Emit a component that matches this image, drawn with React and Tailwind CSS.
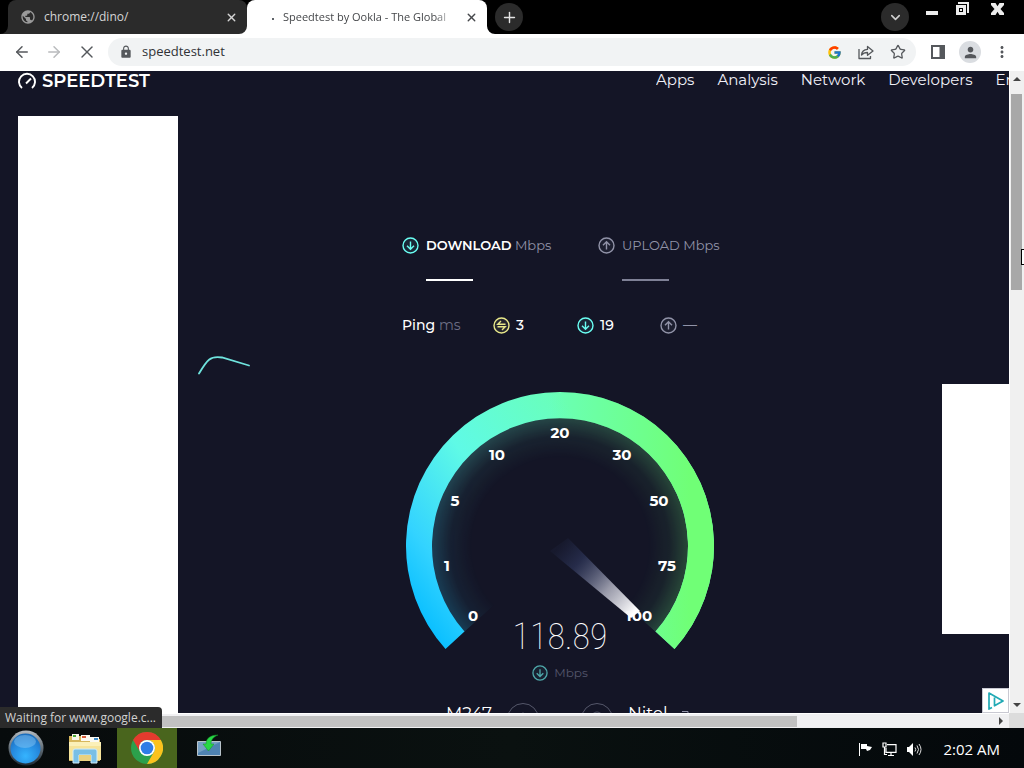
import React from "react";
import { ArrowLeft, ArrowRight, X, Plus, ChevronDown, Star } from "lucide-react";
import { FcGoogle } from "react-icons/fc";
import { MdLock, MdPerson, MdMoreVert, MdPublic } from "react-icons/md";

const ui = "font-['Segoe_UI','Open_Sans',sans-serif]";
const brand = "font-['Montserrat','Inter',sans-serif]";

function Flare({ className }) {
  return (
    <svg className={className} width="8" height="8" viewBox="0 0 8 8" aria-hidden="true">
      <path d="M0 8H8V0A8 8 0 0 1 0 8Z" fill="currentColor" />
    </svg>
  );
}

function TabStrip() {
  return (
    <div className="flex h-[34px] shrink-0 items-start bg-black pl-2 text-xs">
      <div className="relative flex h-full w-[239px] items-center rounded-t-lg bg-[#2b2b2b] pr-2 pl-3 text-[#d5d5d5]">
        <Flare className="absolute bottom-0 -left-2 text-[#2b2b2b]" />
        <MdPublic className="mr-2 size-4 shrink-0 text-[#9a9a9a]" />
        <span className="flex-1 truncate">chrome://dino/</span>
        <button aria-label="Close dino tab" className="flex size-4 items-center justify-center">
          <X size={13} strokeWidth={2.5} />
        </button>
      </div>
      <div className="relative flex h-full w-60 items-center rounded-t-lg bg-white pr-2 pl-3 text-[#45474a]">
        <Flare className="absolute bottom-0 -left-2 text-white" />
        <Flare className="absolute -right-2 bottom-0 -scale-x-100 text-white" />
        <span className="mr-2 flex size-4 shrink-0 items-center justify-center pt-1 pl-3">
          <span className="size-[2px] bg-[#5f6368]" />
        </span>
        <span className="w-[172px] overflow-hidden text-[11px] whitespace-nowrap [mask-image:linear-gradient(to_right,black_88%,transparent)]">
          Speedtest by Ookla - The Global
        </span>
        <button aria-label="Close Speedtest tab" className="ml-auto flex size-4 items-center justify-center">
          <X size={13} strokeWidth={2.5} />
        </button>
      </div>
      <button aria-label="New tab" className="mt-[3px] ml-2 flex size-7 items-center justify-center rounded-full bg-[#2b2b2b] text-[#e4e4e4]">
        <Plus size={17} />
      </button>
      <div className="ml-auto flex items-start pr-5 text-[#ececec]">
        <button aria-label="Search tabs" className="mt-[3px] flex size-7 items-center justify-center rounded-full bg-[#2b2b2b] text-[#cfcfcf]">
          <ChevronDown size={15} strokeWidth={2.5} />
        </button>
        <button aria-label="Minimize" className="mt-[11px] ml-[17px]">
          <svg width="12" height="4" viewBox="0 0 12 4"><path d="M0 0h12v4H0z" fill="currentColor" /></svg>
        </button>
        <button aria-label="Restore" className="mt-[2px] ml-[17px]">
          <svg width="14" height="14" viewBox="0 0 14 14">
            <path d="M3 0h11v11h-2V2H3z" fill="currentColor" />
            <path d="M1 3h10v10H1z M4 6v4h4V6z" fill="currentColor" fillRule="evenodd" />
            <path d="M5 7h2v2H5z" fill="currentColor" />
          </svg>
        </button>
        <button aria-label="Close window" className="mt-[3px] ml-[22px]">
          <svg width="13" height="12" viewBox="0 0 13 12">
            <path d="M0 0h4.500l2 3.200L8.500 0H13v2L9.500 6l3.500 4v2H8.500l-2-3.200L4.500 12H0v-2l3.500-4L0 2z" fill="currentColor" />
          </svg>
        </button>
      </div>
    </div>
  );
}

function Toolbar() {
  return (
    <div className="flex h-[37px] shrink-0 items-center bg-white pr-[13px] pb-px pl-[13px] text-[#55585c]">
      <button aria-label="Back" className="mr-[14px]"><ArrowLeft size={18} /></button>
      <button aria-label="Forward" className="mr-[14px] text-[#b9bbbd]"><ArrowRight size={18} /></button>
      <button aria-label="Stop loading"><X size={20} strokeWidth={1.7} /></button>
      <form className="ml-[11px] flex h-7 flex-1 items-center rounded-full bg-[#f1f3f4] pr-[10px] pl-[11px]">
        <MdLock size={14} className="mr-[9px]" />
        <input aria-label="Address" defaultValue="speedtest.net" className="min-w-0 flex-1 bg-transparent text-[13px] text-[#303236] outline-none" />
        <button type="button" aria-label="Search with Google" className="mr-4"><FcGoogle size={15} /></button>
        <button type="button" aria-label="Share" className="mr-4">
          <svg width="16" height="16" viewBox="0 0 16 16" fill="none" stroke="currentColor" strokeWidth="1.3" strokeLinejoin="round">
            <path d="M1 5v9.500h11.500V12" />
            <path d="M3.500 11c.3-3.600 2.500-5.400 6-5.600V2.500L15 7l-5.500 4.300V8.500c-2.800 0-4.600.8-6 2.500z" />
          </svg>
        </button>
        <button type="button" aria-label="Bookmark this tab"><Star size={16} strokeWidth={1.9} /></button>
      </form>
      <button aria-label="Side panel" className="ml-[15px]">
        <svg width="14" height="14" viewBox="0 0 14 14">
          <path d="M0 0h14v14H0z M2 2v10h6.500V2z" fill="currentColor" fillRule="evenodd" />
        </svg>
      </button>
      <button aria-label="Profile" className="ml-[14px] flex size-[22px] items-center justify-center rounded-full bg-[#dadde1]">
        <MdPerson size={17} />
      </button>
      <button aria-label="Menu" className="ml-3"><MdMoreVert size={18} /></button>
    </div>
  );
}

function CircleArrow({ up, className }) {
  return (
    <svg className={className} width="17" height="17" viewBox="0 0 17 17" fill="none" stroke="currentColor" strokeWidth="1.4" aria-hidden="true">
      <circle cx="8.500" cy="8.500" r="7.500" fill="currentColor" fillOpacity="0.08" />
      {up ? (
        <path d="M8.500 12.500V5M5 8.200 8.500 4.800 12 8.200" />
      ) : (
        <path d="M8.500 4.500V12M5 8.800l3.500 3.400L12 8.800" />
      )}
    </svg>
  );
}

function PingIcon() {
  return (
    <svg className="text-[#e8e88a]" width="17" height="17" viewBox="0 0 17 17" fill="none" stroke="currentColor" strokeWidth="1.4" aria-hidden="true">
      <circle cx="8.500" cy="8.500" r="7.500" fill="currentColor" fillOpacity="0.08" />
      <path d="M12.500 7.200H4.800L8 4M4.500 9.800h7.700L9 13" />
    </svg>
  );
}

function Results() {
  return (
    <div className="mx-auto w-[316px] whitespace-nowrap text-[#9193a8]">
      <div className="grid grid-cols-[196px_auto] text-[13px] leading-5">
        <div>
          <div className="flex items-center gap-[7px]">
            <CircleArrow className="text-[#6afff3]" />
            <span><span className="font-semibold text-white">DOWNLOAD</span> Mbps</span>
          </div>
          <div className="mt-6 ml-6 h-[2px] w-[47px] bg-white" />
        </div>
        <div>
          <div className="flex items-center gap-[7px]">
            <CircleArrow up />
            <span>UPLOAD Mbps</span>
          </div>
          <div className="mt-6 ml-6 h-[2px] w-[47px] bg-[#7f8196]" />
        </div>
      </div>
      <div className="mt-[34px] grid grid-cols-[91px_84px_83px_auto] items-center text-sm leading-5">
        <span><span className="font-medium text-white">Ping</span> <span className="text-[#6d6f85]">ms</span></span>
        <span className="flex items-center gap-[6px] font-medium text-white"><PingIcon />3</span>
        <span className="flex items-center gap-[6px] font-medium text-white"><CircleArrow className="text-[#6afff3]" />19</span>
        <span className="flex items-center gap-[6px]"><CircleArrow up />—</span>
      </div>
    </div>
  );
}

const marks = [
  ["0", 473, 621],
  ["1", 447, 571],
  ["5", 455, 506],
  ["10", 497, 460],
  ["20", 560, 438],
  ["30", 622, 460],
  ["50", 659, 506],
  ["75", 667, 571],
  ["100", 639, 621],
];

const arcPath = "M445.500 649A154 154 0 1 1 674.500 649L655.500 631.500A128 128 0 1 0 464.500 631.500Z";
const dialPath = "M560 546 464 632A129 129 0 1 1 656 632Z";

function Gauge() {
  return (
    <div className="mx-auto grid w-[308px] grid-rows-[291px]">
      <svg className="col-start-1 row-start-1" width="308" height="258" viewBox="406 392 308 258">
        <defs>
          <linearGradient id="arc" gradientUnits="userSpaceOnUse" x1="430" y1="650" x2="660" y2="480">
            <stop offset="0" stopColor="#00baff" />
            <stop offset="0.2" stopColor="#33d3ff" />
            <stop offset="0.5" stopColor="#5ffae6" />
            <stop offset="0.9" stopColor="#6affb8" />
          </linearGradient>
          <linearGradient id="green" gradientUnits="userSpaceOnUse" x1="550" y1="546" x2="690" y2="546">
            <stop offset="0" stopColor="#70ff76" stopOpacity="0" />
            <stop offset="1" stopColor="#70ff76" />
          </linearGradient>
          <radialGradient id="edge" gradientUnits="userSpaceOnUse" cx="560" cy="546" r="129">
            <stop offset="0.68" stopColor="#fff" stopOpacity="0" />
            <stop offset="0.85" stopColor="#fff" stopOpacity="0.06" />
            <stop offset="1" stopColor="#fff" stopOpacity="0.22" />
          </radialGradient>
          <mask id="glow" maskUnits="userSpaceOnUse" x="406" y="392" width="308" height="258">
            <circle cx="560" cy="546" r="129" fill="url(#edge)" />
          </mask>
          <linearGradient id="needle" gradientUnits="userSpaceOnUse" x1="560" y1="546" x2="634" y2="612">
            <stop offset="0" stopColor="#33406f" stopOpacity="0.1" />
            <stop offset="0.25" stopColor="#3c4876" stopOpacity="0.45" />
            <stop offset="0.65" stopColor="#b9bac9" stopOpacity="0.8" />
            <stop offset="1" stopColor="#fff" />
          </linearGradient>
        </defs>
        <g mask="url(#glow)">
          <path d={dialPath} fill="url(#arc)" />
          <path d={dialPath} fill="url(#green)" />
        </g>
        <path d={arcPath} fill="url(#arc)" />
        <path d={arcPath} fill="url(#green)" />
        <g className={brand} fill="#fff" fontSize="15" fontWeight="700" textAnchor="middle">
          {marks.map(([label, x, y]) => (
            <text key={label} x={x} y={y}>{label}</text>
          ))}
        </g>
        <path d="M550 551 568 538 640 611 631 618Z" fill="url(#needle)" />
      </svg>
      <div className="col-start-1 row-start-1 flex flex-col items-center self-end">
        <span className="font-['Roboto_Condensed','Roboto',sans-serif] text-[36px] leading-[40px] font-thin text-white">118.89</span>
        <span className="mt-[6px] flex h-5 items-center gap-[6px] text-xs text-[#55576c]">
          <CircleArrow className="size-4 text-[#4fa9ab]" />
          Mbps
        </span>
      </div>
    </div>
  );
}

function ServerRow() {
  return (
    <div className="mt-5 grid grid-cols-[1fr_106px_1fr] gap-x-[15px] text-[17px] leading-5 text-white">
      <span className="text-right">M247</span>
      <div className="flex justify-between">
        <svg width="32" height="32" viewBox="0 0 32 32" fill="none" stroke="#55576a">
          <circle cx="16" cy="16" r="15.500" />
          <circle cx="16" cy="13" r="3" />
        </svg>
        <svg width="32" height="32" viewBox="0 0 32 32" fill="none" stroke="#55576a">
          <circle cx="16" cy="16" r="15.500" />
          <circle cx="16" cy="15" r="6" />
        </svg>
      </div>
      <span className="flex gap-[13px]">
        Nitel
        <svg className="mt-2" width="8" height="8" viewBox="0 0 8 8" fill="none" stroke="#9193a8" aria-hidden="true">
          <path d="M1 .5h6v6" />
        </svg>
      </span>
    </div>
  );
}

function Page() {
  return (
    <div className={`relative min-w-0 overflow-hidden bg-[#141526] ${brand}`}>
      <div className="flex flex-col">
        <header className="flex h-[18px] items-center pl-[18px]">
          <a href="#home" className="flex items-center gap-[6px] pt-[2px] text-[18px] leading-5 font-semibold text-white">
            <svg width="18" height="18" viewBox="0 0 18 18" fill="none" stroke="currentColor" strokeWidth="1.900" aria-hidden="true">
              <path d="M4 16A8 8 0 1 1 14 16" />
              <path d="M8 11.500 13 6.500" />
            </svg>
            SPEEDTEST
          </a>
          <nav className="ml-auto flex w-[353px] shrink-0 gap-[23px] overflow-hidden text-[15px] leading-5 whitespace-nowrap text-[#f0f0f8]">
            <a href="#apps">Apps</a>
            <a href="#analysis">Analysis</a>
            <a href="#network">Network</a>
            <a href="#developers">Developers</a>
            <a href="#enterprise">Enterprise</a>
          </nav>
        </header>
        <div className="mt-[27px] grid grid-cols-[160px_minmax(0,1fr)_67px] pl-[18px]">
          <aside className="min-h-[600px] bg-white" />
          <main className="pt-[119px]">
            <Results />
            <svg className="mt-5 ml-5" width="52" height="20" viewBox="0 0 52 20" fill="none" aria-hidden="true">
              <path d="M1 18.500C9 5 12 .5 24 2.500L51 10.500" stroke="#6fe3dd" strokeWidth="1.800" strokeLinecap="round" />
            </svg>
            <div className="mt-[17px]"><Gauge /></div>
            <ServerRow />
          </main>
          <aside className="mt-[268px] h-[250px] bg-white" />
        </div>
      </div>
      <a href="#adchoices" aria-label="AdChoices" className="absolute right-0 bottom-0 flex h-[25px] w-[27px] items-center justify-center border border-[#c9c9d2] bg-white">
        <svg width="18" height="18" viewBox="0 0 18 18" fill="none" stroke="#22aab5" strokeWidth="1.700" strokeLinejoin="round">
          <path d="M5 15.500 2 17V1L16 9 7.500 13.800V5.500" />
        </svg>
      </a>
    </div>
  );
}

function Arrow({ d, className }) {
  return (
    <svg className={className} width="8" height="8" viewBox="0 0 8 8" aria-hidden="true"><path d={d} fill="#444" /></svg>
  );
}

function Taskbar() {
  return (
    <footer className="flex h-10 shrink-0 items-center bg-linear-to-r from-[#070b0c] via-[#0a1110] to-[#04080b] text-white">
      <button aria-label="Start" className="w-[52px] pl-[7px]">
        <svg width="38" height="36" viewBox="0 0 38 36">
          <defs>
            <radialGradient id="orb" cx="0.5" cy="0.75" r="0.8">
              <stop offset="0" stopColor="#35b4ff" />
              <stop offset="0.6" stopColor="#2587dc" />
              <stop offset="1" stopColor="#1766b3" />
            </radialGradient>
            <linearGradient id="rim" x1="0" y1="0" x2="0" y2="1">
              <stop offset="0" stopColor="#b5bbc0" />
              <stop offset="0.6" stopColor="#56626c" />
              <stop offset="1" stopColor="#1e2a34" />
            </linearGradient>
          </defs>
          <circle cx="19" cy="18" r="17.500" fill="url(#rim)" />
          <circle cx="18.500" cy="18.500" r="15" fill="url(#orb)" />
          <ellipse cx="18" cy="11.500" rx="11" ry="6.500" fill="#8fcaf4" opacity="0.45" />
        </svg>
      </button>
      <button aria-label="File Explorer" className="flex w-[65px] justify-center">
        <svg width="34" height="32" viewBox="0 0 34 32">
          <path d="M1 4h12l2 3h17v22H1z" fill="#d7b75c" />
          <path d="M4 2h7v6H4z" fill="#f7f6ea" /><path d="M5 3h3v2H5z" fill="#4dab35" />
          <path d="M13 3h9v6h-9z" fill="#fbfaf2" /><path d="M14 4h4v2h-4z" fill="#d65c3c" />
          <path d="M22 5h9v5h-9z" fill="#fbfaf2" /><path d="M26 6h4v2h-4z" fill="#3f8cc9" />
          <path d="M1 10h32v18H1z" fill="#f6e49a" /><path d="M1 10h32v4H1z" fill="#fbf0b8" />
          <path d="M5 31V19q0-2 2-2h20q2 0 2 2v12h-6v-8H11v8z" fill="#79bfe6" stroke="#d1edfa" />
          <path d="M11 23h12v6H11z" fill="#e9d180" />
        </svg>
      </button>
      <button aria-label="Google Chrome" className="flex h-full w-[60px] items-center justify-center bg-[#49651d]">
        <svg width="32" height="32" viewBox="0 0 32 32">
          <circle cx="16" cy="16" r="16" fill="#2ca04c" />
          <path d="M2.140 8A16 16 0 0 1 29.860 8H16A8 8 0 0 0 9.070 20Z" fill="#e33b2e" />
          <path d="M29.860 8A16 16 0 0 1 16 32L22.930 20A8 8 0 0 0 16 8Z" fill="#fbc21d" />
          <circle cx="16" cy="16" r="8" fill="#fff" />
          <circle cx="16" cy="16" r="6.300" fill="#2f7de6" />
        </svg>
      </button>
      <button aria-label="Installer" className="ml-5 -mt-1">
        <svg width="24" height="24" viewBox="0 0 24 24">
          <path d="M.5 7.500h23v14H.5z" fill="#4f83b2" stroke="#b8c3ca" />
          <path d="M1 8h22L1 19z" fill="#90b4cf" opacity="0.6" />
          <path d="M21 1C14 1 9 4 9 10H6l5.500 7 5.500-7H14c0-4 2-7 7-9z" fill="#27d845" stroke="#168e2a" strokeWidth="0.500" />
        </svg>
      </button>
      <div className="ml-auto flex items-center gap-[9px] pt-[2px] pr-6">
        <svg width="15" height="15" viewBox="0 0 15 15" fill="#fff" aria-label="Action center">
          <path d="M1 1h1v13H1z M3 2h6v2l5 1-2 3-3 1-1-2H3z" />
        </svg>
        <svg width="15" height="15" viewBox="0 0 15 15" fill="none" stroke="#fff" strokeWidth="1.200" aria-label="Network">
          <path d="M5 2.600h9v7.800H4V6M9 10.500V13M6 13.500h6M2.500 5v7.500H5" /><path d="M1 1h3v4H1z" />
        </svg>
        <svg width="16" height="15" viewBox="0 0 16 15" aria-label="Volume">
          <path d="M1 5h2l4-4v13l-4-4H1z" fill="#fff" />
          <path d="M9 5.500q1.500 2 0 4M11 3.500q3 4 0 8M13 2q4 5.500 0 11" fill="none" stroke="#ddd" />
        </svg>
        <time className="ml-3 text-[15px] leading-5 whitespace-nowrap">2:02 AM</time>
      </div>
    </footer>
  );
}

export default function App() {
  return (
    <div className={`flex h-screen flex-col overflow-hidden ${ui}`}>
      <TabStrip />
      <Toolbar />
      <div className="relative grid min-h-0 flex-1 grid-cols-[minmax(0,1fr)_15px] grid-rows-[minmax(0,1fr)_15px]">
        <Page />
        <div className="flex flex-col items-center border-l border-white bg-[#f0f0f0] py-1 pr-px">
          <Arrow d="M0 6 4 2l4 4z" />
          <div className="mt-[11px] h-[196px] w-[11px] bg-[#a8a8a8]" />
          <Arrow className="mt-auto" d="M0 2h8L4 6z" />
        </div>
        <div className="flex items-center border-t border-white bg-[#f0f0f2]">
          <div className="h-[11px] w-[79%] bg-[#c1c1c1]" />
          <Arrow className="mr-1 ml-auto" d="M2 0v8l4-4z" />
        </div>
        <div className="bg-[#dcdcdc]" />
        <div className="absolute top-[178px] right-0 h-4 w-[3px] border border-r-0 border-black bg-white" />
        <div role="status" className="absolute bottom-0 left-0 h-[21px] w-[162px] rounded-tr bg-[#2b2b2b] pl-[5px] text-xs leading-[21px] whitespace-nowrap text-[#d2d2d2]">
          Waiting for www.google.c...
        </div>
      </div>
      <Taskbar />
    </div>
  );
}
